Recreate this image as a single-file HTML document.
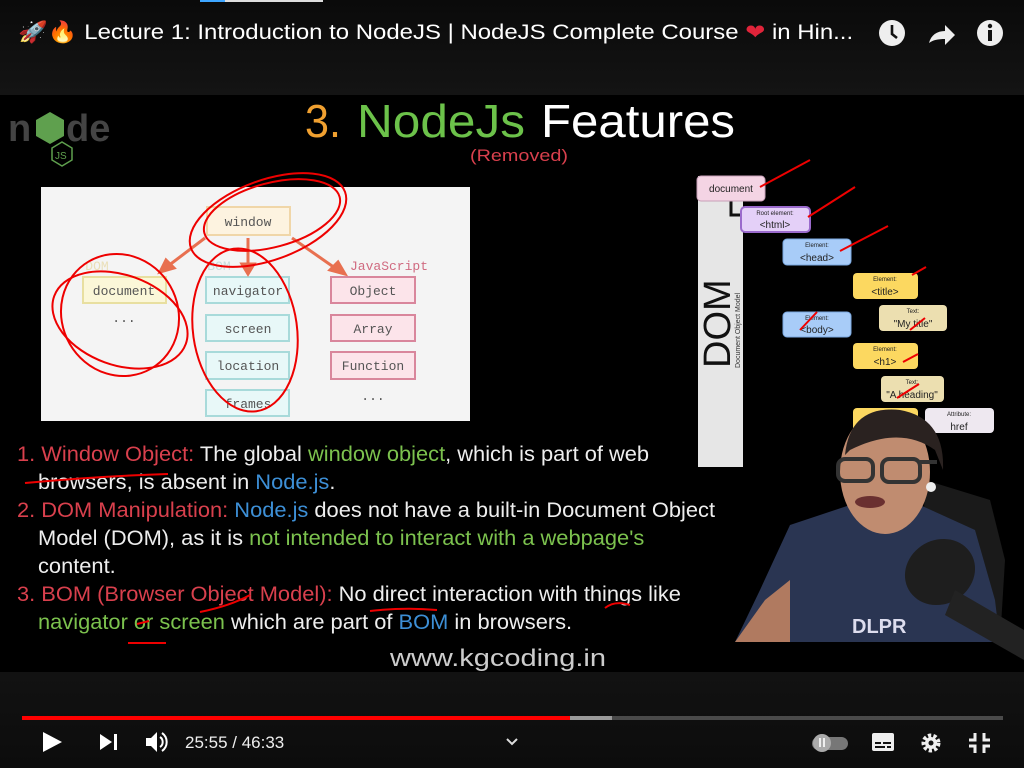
<!DOCTYPE html>
<html><head><meta charset="utf-8"><style>
html,body{margin:0;padding:0;width:1024px;height:768px;overflow:hidden;background:#000;font-family:"Liberation Sans",sans-serif}
.top{position:absolute;left:0;top:0;width:1024px;height:95px;background:linear-gradient(#0a0a0a,#141414)}
.bot{position:absolute;left:0;top:672px;width:1024px;height:96px;background:linear-gradient(#121212,#0c0c0c)}
.t{position:absolute;white-space:nowrap}
.ln{position:absolute;left:17px;font-size:21px;color:#eee;white-space:nowrap;transform-origin:0 50%;transform:scaleX(1.04)}
.r{color:#d9404d}.g{color:#7cc24e}.b{color:#3d8fd6}
</style></head><body>
<div class="top">
<div style="position:absolute;left:200px;top:0;width:25px;height:2px;background:#3ea6ff"></div>
<div style="position:absolute;left:225px;top:0;width:98px;height:2px;background:#ddd"></div>
<div class="t" style="left:18px;top:20px;font-size:21px;color:#fff;font-family:'Liberation Sans','DejaVu Sans',sans-serif;transform:scaleX(1.14);transform-origin:0 0">🚀🔥 Lecture 1: Introduction to NodeJS | NodeJS Complete Course <span style="color:#e0243a">❤</span> in Hin...</div>
<svg style="position:absolute;left:876px;top:17px" width="135" height="32" viewBox="0 0 135 32">
<circle cx="16" cy="16" r="13" fill="#eee"/><path d="M16 8v9l5 4" stroke="#111" stroke-width="2.6" fill="none"/>
<path d="M53 26c2-8 8-12 16-12v-6l10 10-10 10v-6c-7 0-12 1-16 4z" fill="#eee"/>
<circle cx="114" cy="16" r="13" fill="#eee"/><rect x="112" y="13" width="4" height="11" fill="#111"/><circle cx="114" cy="9" r="2.2" fill="#111"/>
</svg>
</div>

<svg style="position:absolute;left:0;top:95px" width="1024" height="577" viewBox="0 95 1024 577" font-family="Liberation Sans,sans-serif">
<rect x="0" y="95" width="1024" height="577" fill="#000"/>
<text x="8" y="141" font-size="38" font-weight="bold" fill="#444">n</text>
<polygon points="50,112 64,120 64,136 50,144 36,136 36,120" fill="#5fa04e"/>
<text x="66" y="141" font-size="38" font-weight="bold" fill="#444">de</text>
<polygon points="62,142 72,148 72,160 62,166 52,160 52,148" fill="none" stroke="#5fa04e" stroke-width="1.5"/>
<text x="55" y="159" font-size="10" fill="#5fa04e">JS</text>
<text x="305" y="137" font-size="46" fill="#f0a030" textLength="36" lengthAdjust="spacingAndGlyphs">3.</text>
<text x="357" y="137" font-size="46" fill="#6cc24a" textLength="168" lengthAdjust="spacingAndGlyphs">NodeJs</text>
<text x="541" y="137" font-size="46" fill="#fff" textLength="194" lengthAdjust="spacingAndGlyphs">Features</text>
<text x="470" y="161" font-size="17" fill="#d9404d" textLength="98" lengthAdjust="spacingAndGlyphs">(Removed)</text>
<rect x="41" y="187" width="429" height="234" fill="#f4f4f4"/>
<g font-family="Liberation Mono,monospace" font-size="13" text-anchor="middle" fill="#555">
<rect x="207" y="207" width="83" height="28" fill="#fdf3e0" stroke="#f0d6a8" stroke-width="2"/><text x="248" y="226">window</text>
<rect x="83" y="277" width="83" height="26" fill="#fbf7d8" stroke="#e8dfa0" stroke-width="2"/><text x="124" y="295">document</text>
<text x="124" y="322">...</text>
<g fill="#e8f8f8" stroke="#a8dada" stroke-width="2">
<rect x="206" y="277" width="83" height="26"/><rect x="206" y="315" width="83" height="26"/><rect x="206" y="352" width="83" height="27"/><rect x="206" y="390" width="83" height="26"/></g>
<text x="248" y="295">navigator</text><text x="248" y="333">screen</text><text x="248" y="370">location</text><text x="248" y="408">frames</text>
<g fill="#fce4ea" stroke="#d9869c" stroke-width="2">
<rect x="331" y="277" width="84" height="26"/><rect x="331" y="315" width="84" height="26"/><rect x="331" y="352" width="84" height="27"/></g>
<text x="373" y="295">Object</text><text x="373" y="333">Array</text><text x="373" y="370">Function</text>
<text x="373" y="400">...</text>
<text x="389" y="270" fill="#d06a80">JavaScript</text>
<text x="219" y="270" fill="#c8dcdc">BOM</text>
<text x="97" y="270" fill="#eadfb8">DOM</text>
</g>
<g stroke="#e87050" stroke-width="3" fill="#e87050">
<line x1="205" y1="238" x2="168" y2="266"/><polygon points="160,272 166,260 174,268"/>
<line x1="248" y1="238" x2="248" y2="266"/><polygon points="248,274 242,264 254,264"/>
<line x1="292" y1="238" x2="335" y2="268"/><polygon points="345,274 330,270 338,262"/>
</g>
<g stroke="#e00" stroke-width="2" fill="none">
<ellipse cx="268" cy="220" rx="82" ry="40" transform="rotate(-20 268 220)"/>
<ellipse cx="272" cy="215" rx="70" ry="32" transform="rotate(-15 272 215)"/>
<ellipse cx="120" cy="315" rx="58" ry="62" transform="rotate(-30 120 315)"/>
<ellipse cx="120" cy="320" rx="70" ry="45" transform="rotate(20 120 320)"/>
<ellipse cx="245" cy="330" rx="52" ry="82" transform="rotate(-8 245 330)"/>
</g>
<rect x="698" y="176" width="45" height="291" fill="#e6e6e6"/>
<text transform="translate(730 368) rotate(-90)" font-size="38" fill="#111">DOM</text>
<text transform="translate(740 368) rotate(-90)" font-size="7" fill="#333">Document Object Model</text>
<path d="M731 200v15h12" stroke="#111" stroke-width="3" fill="none"/>
<g font-size="10" text-anchor="middle" fill="#222">
<rect x="697" y="176" width="68" height="25" rx="4" fill="#f4d4e4" stroke="#c8a0b8"/><text x="731" y="192">document</text>
<rect x="741" y="207" width="69" height="25" rx="4" fill="#e4d0f8" stroke="#9a6acc" stroke-width="2"/><text x="775" y="215" font-size="6">Root element:</text><text x="775" y="228">&lt;html&gt;</text>
<rect x="783" y="239" width="68" height="26" rx="4" fill="#a8ccf8" stroke="#7aa8e0"/><text x="817" y="247" font-size="6">Element:</text><text x="817" y="261">&lt;head&gt;</text>
<rect x="853" y="273" width="65" height="26" rx="4" fill="#fcd860"/><text x="885" y="281" font-size="6">Element:</text><text x="885" y="295">&lt;title&gt;</text>
<rect x="783" y="312" width="68" height="25" rx="4" fill="#a8ccf8" stroke="#7aa8e0"/><text x="817" y="320" font-size="6">Element:</text><text x="817" y="333">&lt;body&gt;</text>
<rect x="879" y="305" width="68" height="26" rx="4" fill="#ecdfb0"/><text x="913" y="313" font-size="6">Text:</text><text x="913" y="327">"My title"</text>
<rect x="853" y="343" width="65" height="26" rx="4" fill="#fcd860"/><text x="885" y="351" font-size="6">Element:</text><text x="885" y="365">&lt;h1&gt;</text>
<rect x="881" y="376" width="63" height="26" rx="4" fill="#ecdfb0"/><text x="912" y="384" font-size="6">Text:</text><text x="912" y="398">"A heading"</text>
<rect x="853" y="408" width="65" height="24" rx="4" fill="#fcd860"/>
<rect x="925" y="408" width="69" height="25" rx="4" fill="#eee8f0"/><text x="959" y="416" font-size="6">Attribute:</text><text x="959" y="430">href</text>
</g>
<g stroke="#e00" stroke-width="2" fill="none">
<path d="M760 187l50-27"/><path d="M808 217l47-30"/><path d="M840 251l48-25"/><path d="M912 275l14-8"/><path d="M800 330l17-18"/><path d="M910 330l15-12"/><path d="M903 362l15-8"/><path d="M897 398l22-14"/>
</g>
<path d="M925 480 L990 500 L1005 560 L1000 642 L920 642 Z" fill="#1a1a1a"/>
<path d="M735 642 L760 590 L790 525 L850 505 L920 505 L975 530 L995 600 L1000 642 Z" fill="#2a3552"/>
<path d="M735 642 L765 600 L790 580 L790 642 Z" fill="#b07a60"/>
<ellipse cx="885" cy="472" rx="45" ry="62" fill="#c08c70"/>
<path d="M845 455 Q850 405 900 410 Q945 418 943 470 L935 450 Q900 425 850 450Z" fill="#2a2220"/>
<g stroke="#333" stroke-width="4" fill="none"><rect x="838" y="459" width="35" height="22" rx="7"/><rect x="882" y="459" width="38" height="23" rx="7"/><path d="M920 462h17"/></g>
<ellipse cx="870" cy="502" rx="15" ry="6" fill="#6a3030"/>
<circle cx="931" cy="487" r="5" fill="#eee"/>
<text x="852" y="633" font-size="20" font-weight="bold" fill="#dde">DLPR</text>
<ellipse cx="940" cy="572" rx="36" ry="32" fill="#1e1e1e" transform="rotate(-30 940 572)"/>
<path d="M955 590 L1024 630 L1024 660 L945 615Z" fill="#222"/>
<text x="390" y="666" font-size="24" fill="#ccc" textLength="216" lengthAdjust="spacingAndGlyphs">www.kgcoding.in</text>
</svg>

<div class="ln" style="top:443px"><span class="r">1. Window Object: </span>The global <span class="g">window object</span>, which is part of web</div>
<div class="ln" style="top:471px;left:38px">browsers, is absent in <span class="b">Node.js</span>.</div>
<div class="ln" style="top:499px"><span class="r">2. DOM Manipulation: </span><span class="b">Node.js</span> does not have a built-in Document Object</div>
<div class="ln" style="top:527px;left:38px">Model (DOM), as it is <span class="g">not intended to interact with a webpage's</span></div>
<div class="ln" style="top:555px;left:38px">content.</div>
<div class="ln" style="top:583px"><span class="r">3. BOM (Browser Object Model): </span>No direct interaction with things like</div>
<div class="ln" style="top:611px;left:38px"><span class="g">navigator or screen</span> which are part of <span class="b">BOM</span> in browsers.</div>
<svg style="position:absolute;left:0;top:440px" width="700" height="210"><g stroke="#e00" stroke-width="2" fill="none">
<path d="M25 43 Q100 36 168 34"/><path d="M200 172 Q230 166 250 155"/><path d="M370 171 Q405 167 437 170"/><path d="M605 168 Q615 160 630 165"/><path d="M128 203h38"/><path d="M137 184l12-3"/></g></svg>

<div class="bot">
<div style="position:absolute;left:22px;top:44px;width:981px;height:4px;background:#4a4a4a"></div>
<div style="position:absolute;left:570px;top:44px;width:42px;height:4px;background:#9a9a9a"></div>
<div style="position:absolute;left:22px;top:44px;width:548px;height:4px;background:#f00"></div>
<svg style="position:absolute;left:0;top:0" width="1024" height="96">
<polygon points="43,60 62,70 43,80" fill="#fff"/>
<polygon points="100,62 112,70 100,78" fill="#fff"/><rect x="114" y="62" width="3" height="16" fill="#fff"/>
<polygon points="146,66 151,66 157,60 157,80 151,74 146,74" fill="#fff"/><path d="M160 65a6 6 0 0 1 0 10M162 61a11 11 0 0 1 0 18" stroke="#fff" stroke-width="2" fill="none"/>
<text x="185" y="76" font-size="17" fill="#eee">25:55 / 46:33</text>
<path d="M507 67l5 5 5-5" stroke="#ddd" stroke-width="2" fill="none"/>
<rect x="812" y="65" width="36" height="13" rx="6.5" fill="#777"/><circle cx="822" cy="71" r="9" fill="#aaa"/><rect x="819" y="66" width="2" height="9" fill="#eee"/><rect x="823" y="66" width="2" height="9" fill="#eee"/>
<rect x="872" y="61" width="22" height="18" rx="2" fill="#eee"/><rect x="875" y="70" width="6" height="2" fill="#111"/><rect x="883" y="70" width="8" height="2" fill="#111"/><rect x="875" y="74" width="10" height="2" fill="#111"/><rect x="887" y="74" width="4" height="2" fill="#111"/>
<circle cx="931" cy="71" r="7" fill="none" stroke="#eee" stroke-width="5" stroke-dasharray="3 2"/><circle cx="931" cy="71" r="6" fill="#eee"/><circle cx="931" cy="71" r="2.5" fill="#111"/>
<path d="M975 61v7h-6M984 61v7h6M975 81v-7h-6M984 81v-7h6" stroke="#eee" stroke-width="3" fill="none"/>
</svg>
</div>
</body></html>
